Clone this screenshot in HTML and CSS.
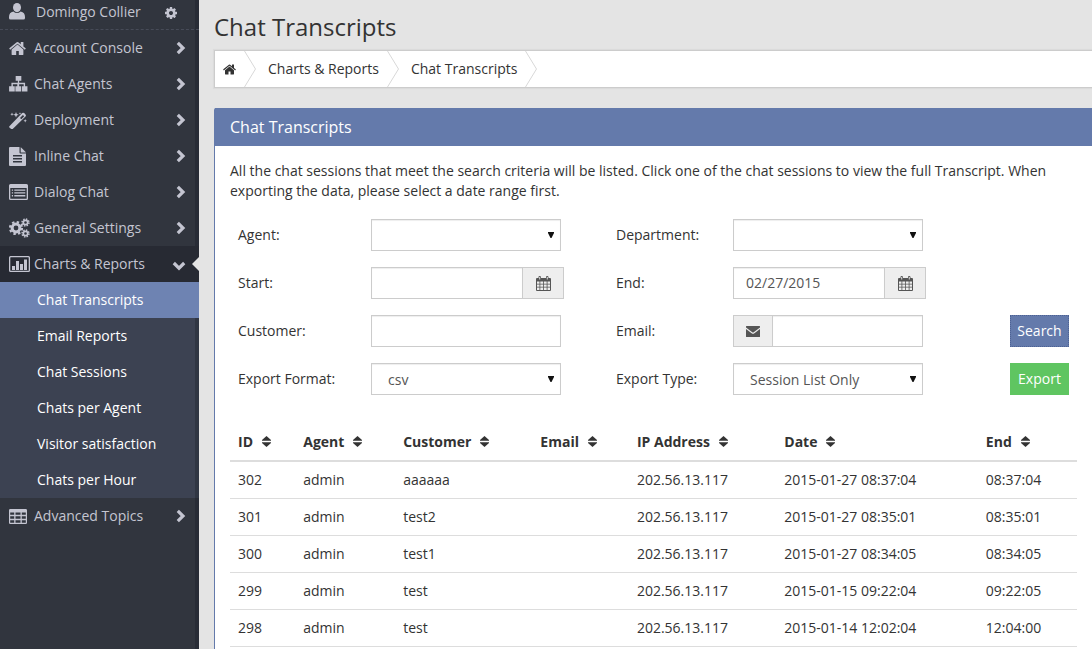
FILE: index.html
```html
<!DOCTYPE html>
<html lang="en">
<head>
  <meta charset="UTF-8" />
  <meta name="viewport" content="width=device-width, initial-scale=1.0" />
  <title>Chat Transcripts</title>
  <link rel="stylesheet" href="styles.css">
</head>
<body>
  <!-- icon set -->
  <svg class="sprite" aria-hidden="true">
    <symbol id="i-user" viewBox="0 0 16 17"><ellipse cx="8" cy="4.600" rx="4" ry="4.600"/><path d="M4.300 8.600Q8 11.600 11.700 8.600 16 9.500 16 14v1q0 1.500-1.500 1.500h-13Q0 16.500 0 15v-1Q0 9.500 4.300 8.600z"/></symbol>
    <symbol id="i-cog" viewBox="128 128 1536 1536"><path d="M1152 896q0-106-75-181t-181-75-181 75-75 181 75 181 181 75 181-75 75-181zm512-109v222q0 12-8 23t-20 13l-185 28q-19 54-39 91 35 50 107 138 10 12 10 25t-9 23q-27 37-99 108t-94 71q-12 0-26-9l-138-108q-44 23-91 38-16 136-29 186-7 28-36 28h-222q-14 0-24.500-8.500t-11.500-21.500l-28-184q-49-16-90-37l-141 107q-10 9-25 9-14 0-25-11-126-114-165-168-7-10-7-23 0-12 8-23 15-21 51-66.500t54-70.500q-27-50-41-99l-183-27q-13-2-21-12.500t-8-23.500v-222q0-12 8-23t19-13l186-28q14-46 39-92-40-57-107-138-10-12-10-24 0-10 9-23 26-36 98.500-107.500t94.500-71.500q13 0 26 10l138 107q44-23 91-38 16-136 29-186 7-28 36-28h222q14 0 24.500 8.500t11.500 21.500l28 184q49 16 90 37l142-107q9-9 24-9 13 0 25 10 129 119 165 170 7 8 7 22 0 12-8 23-15 21-51 66.500t-54 70.500q26 50 41 98l183 28q13 2 21 12.500t8 23.500z"/></symbol>
    <symbol id="i-home" viewBox="64 192 1664 1408"><path d="M1472 992v480q0 26-19 45t-45 19h-384v-384h-256v384h-384q-26 0-45-19t-19-45v-480q0-1 .5-3t.5-3l575-474 575 474q1 2 1 6zm223-69l-62 74q-8 9-21 11h-3q-13 0-21-7l-692-577-692 577q-12 8-24 7-13-2-21-11l-62-74q-8-10-7-23.500t11-21.500l719-599q32-26 76-26t76 26l244 204v-195q0-14 9-23t23-9h192q14 0 23 9t9 23v408l219 182q10 8 11 21.500t-7 23.500z"/></symbol>
    <symbol id="i-sitemap" viewBox="0 0 20 17"><path d="M7 0h6v5h-2.300v2.300H17V11h2.500v5.500h-6V11h2V8.700h-4.800V11h2v5.500h-6V11h2V8.700H4V11h2v5.500H0V11h2.500V7.300h6.800V5H7z"/></symbol>
    <symbol id="i-magic" viewBox="0 0 18 17"><path fill-rule="evenodd" d="M.4 14.300 13.200 1.100q1-.9 2 0l1.300 1.300q.9 1 0 2L3.700 17q-.7.500-1.500-.1L.4 15.500q-.5-.6 0-1.200zM11 5.900l1.300 1.300 2.900-2.900L13.900 3zM3 .6l.5 1.200 1.200.5-1.200.5L3 4l-.5-1.200-1.200-.5 1.200-.5zM7 0l.8 1.900 1.900.8-1.900.8L7 5.400l-.8-1.900-1.900-.8 1.900-.8zM11 .2l.3.9.9.3-.9.300-.3.9-.3-.9-.9-.3.9-.3zM16.200 7l.5 1.200 1.200.5-1.200.5-.5 1.200-.5-1.200-1.200-.5 1.200-.5z"/></symbol>
    <symbol id="i-file" viewBox="0 0 17 19"><path fill-rule="evenodd" d="M1 0h9.500v5.500q0 1 1 1H17V18q0 1-1 1H1q-1 0-1-1V1Q0 0 1 0zM11.700.3q.4.200.7.500l4 4q.3.300.5.700h-5.200zM4 8v1.500h9V8zM4 11v1.500h9V11zM4 14v1.500h9V14z"/></symbol>
    <symbol id="i-list" viewBox="0 0 19 16"><path fill-rule="evenodd" d="M1.500 0h16Q19 0 19 1.500v13q0 1.500-1.500 1.500h-16Q0 16 0 14.500v-13Q0 0 1.500 0zM1.300 4v10.200q0 .5.500.5h15.400q.5 0 .5-.5V4zM2.800 5.500h1.300v1.300H2.800zM5.300 5.500h11v1.300h-11zM2.800 8.300h1.300v1.300H2.800zM5.300 8.300h11v1.300h-11zM2.800 11.100h1.300v1.300H2.800zM5.300 11.100h11v1.300h-11z"/></symbol>
    <symbol id="i-chart" viewBox="0 0 21 16"><path fill-rule="evenodd" d="M1.500 0h18Q21 0 21 1.500v13q0 1.500-1.500 1.500h-18Q0 16 0 14.500v-13Q0 0 1.500 0zM1.300 1.800v12.400q0 .5.500.5h17.400q.5 0 .5-.5V1.800q0-.5-.5-.5H1.800q-.5 0-.5.500zM3 10h3v4H3zM7 5h3v9H7zM11 8h3v6h-3zM15 3.500h3V14h-3z"/></symbol>
    <symbol id="i-table" viewBox="0 0 18 15"><path fill-rule="evenodd" d="M1.300 0h15.400Q18 0 18 1.300v12.400q0 1.300-1.300 1.300H1.300Q0 15 0 13.700V1.300Q0 0 1.300 0zM1.200 3.500v2.300h4V3.500zM6.500 3.500v2.300h5V3.500zM12.800 3.500v2.300h4V3.500zM1.200 7.200v2.600h4V7.200zM6.500 7.200v2.600h5V7.200zM12.800 7.200v2.600h4V7.200zM1.200 11.200v2.500h4v-2.500zM6.500 11.200v2.500h5v-2.500zM12.800 11.200v2.500h4v-2.500z"/></symbol>
    <symbol id="i-cogs" viewBox="0 0 21 20">
      <circle cx="7" cy="10" r="3.900" fill="none" stroke="currentColor" stroke-width="3"/>
      <circle cx="7" cy="10" r="6" fill="none" stroke="currentColor" stroke-width="2.200" stroke-dasharray="2.400 2.312"/>
      <circle cx="16.500" cy="4.500" r="2.200" fill="none" stroke="currentColor" stroke-width="1.700"/>
      <circle cx="16.500" cy="4.500" r="3.500" fill="none" stroke="currentColor" stroke-width="1.400" stroke-dasharray="1.500 1.249"/>
      <circle cx="16.500" cy="15.500" r="2.200" fill="none" stroke="currentColor" stroke-width="1.700"/>
      <circle cx="16.500" cy="15.500" r="3.500" fill="none" stroke="currentColor" stroke-width="1.400" stroke-dasharray="1.500 1.249"/>
    </symbol>
    <symbol id="i-right" viewBox="0 0 10 14"><path d="M1.800 1.800 7 7l-5.200 5.200" fill="none" stroke="currentColor" stroke-width="3.200"/></symbol>
    <symbol id="i-down" viewBox="0 0 14 10"><path d="M1.800 2 7 7.200 12.200 2" fill="none" stroke="currentColor" stroke-width="3.200"/></symbol>
    <symbol id="i-calendar" viewBox="0 0 15 15"><path fill-rule="evenodd" d="M1 2h1.500V1q0-1 1.200-1T5 1v1h5V1q0-1 1.200-1t1.300 1v1H14q1 0 1 1v11q0 1-1 1H1q-1 0-1-1V3q0-1 1-1zM3.300 1v2.500h.9V1zM10.800 1v2.500h.9V1zM1 5.500v2.200h2.500V5.500zM4.300 5.500v2.200h2.800V5.500zM7.900 5.500v2.200h2.800V5.500zM11.500 5.500v2.200H14V5.500zM1 8.500v2.300h2.500V8.500zM4.300 8.500v2.300h2.800V8.500zM7.900 8.500v2.300h2.800V8.500zM11.500 8.500v2.300H14V8.500zM1 11.600V14h2.500v-2.400zM4.300 11.600V14h2.800v-2.400zM7.900 11.600V14h2.800v-2.400zM11.500 11.600V14H14v-2.400z"/></symbol>
    <symbol id="i-mail" viewBox="0 0 14 11"><path d="M.5 0h13q.5 0 .5.500v1L7.700 6.300q-.7.500-1.400 0L0 1.500v-1Q0 0 .5 0zM0 3l5.600 4.300q1.400 1 2.800 0L14 3v7.500q0 .5-.5.500H.5q-.5 0-.5-.5z"/></symbol>
    <symbol id="i-sort" viewBox="0 0 9 11"><path d="M4.500 0 9 4v.7H0V4zM4.500 11 9 7v-.7H0V7z"/></symbol>
    <symbol id="i-caret" viewBox="0 0 6 6"><path d="M0 0h6v1L3.500 6h-1L0 1z"/></symbol>
    <symbol id="i-crumb" viewBox="0 0 12 36"><path d="M.5 0l11 18-11 18" fill="none" stroke="#d8d8d8"/></symbol>
  </svg>

  <div class="page">
    <aside class="sidebar">
      <div class="user">
        <svg class="user-icon"><use href="#i-user"/></svg>
        <span>Domingo Collier</span>
        <a href="#" class="user-settings" aria-label="Settings"><svg><use href="#i-cog"/></svg></a>
      </div>
      <nav>
        <ul class="menu">
          <li><a href="#"><svg class="icon" style="--w:17px;--h:15px"><use href="#i-home"/></svg><span>Account Console</span><svg class="arrow"><use href="#i-right"/></svg></a></li>
          <li><a href="#"><svg class="icon" style="--w:19px;--h:16px"><use href="#i-sitemap"/></svg><span>Chat Agents</span><svg class="arrow"><use href="#i-right"/></svg></a></li>
          <li><a href="#"><svg class="icon" style="--w:18px;--h:17px"><use href="#i-magic"/></svg><span>Deployment</span><svg class="arrow"><use href="#i-right"/></svg></a></li>
          <li><a href="#"><svg class="icon" style="--w:17px;--h:19px"><use href="#i-file"/></svg><span>Inline Chat</span><svg class="arrow"><use href="#i-right"/></svg></a></li>
          <li><a href="#"><svg class="icon" style="--w:19px;--h:16px"><use href="#i-list"/></svg><span>Dialog Chat</span><svg class="arrow"><use href="#i-right"/></svg></a></li>
          <li><a href="#"><svg class="icon" style="--w:21px;--h:20px"><use href="#i-cogs"/></svg><span>General Settings</span><svg class="arrow"><use href="#i-right"/></svg></a></li>
          <li class="open">
            <a href="#"><svg class="icon" style="--w:21px;--h:16px"><use href="#i-chart"/></svg><span>Charts &amp; Reports</span><svg class="arrow arrow-down"><use href="#i-down"/></svg></a>
            <ul class="submenu">
              <li class="active"><a href="#">Chat Transcripts</a></li>
              <li><a href="#">Email Reports</a></li>
              <li><a href="#">Chat Sessions</a></li>
              <li><a href="#">Chats per Agent</a></li>
              <li><a href="#">Visitor satisfaction</a></li>
              <li><a href="#">Chats per Hour</a></li>
            </ul>
          </li>
          <li><a href="#"><svg class="icon" style="--w:18px;--h:15px"><use href="#i-table"/></svg><span>Advanced Topics</span><svg class="arrow"><use href="#i-right"/></svg></a></li>
        </ul>
      </nav>
    </aside>

    <main>
      <h1>Chat Transcripts</h1>
      <ol class="breadcrumb">
        <li><a href="#" aria-label="Home"><svg class="crumb-home"><use href="#i-home"/></svg></a><svg class="crumb-sep"><use href="#i-crumb"/></svg></li>
        <li><a href="#">Charts &amp; Reports</a><svg class="crumb-sep"><use href="#i-crumb"/></svg></li>
        <li><a href="#">Chat Transcripts</a><svg class="crumb-sep"><use href="#i-crumb"/></svg></li>
      </ol>

      <section class="panel">
        <h2>Chat Transcripts</h2>
        <div class="panel-body">
          <p>All the chat sessions that meet the search criteria will be listed. Click one of the chat sessions to view the full Transcript. When exporting the data, please select a date range first.</p>

          <form class="filters">
            <label for="agent">Agent:</label>
            <div class="select">
              <select id="agent"><option></option></select>
              <svg><use href="#i-caret"/></svg>
            </div>
            <label for="department">Department:</label>
            <div class="select">
              <select id="department"><option></option></select>
              <svg><use href="#i-caret"/></svg>
            </div>
            <span></span>

            <label for="start">Start:</label>
            <div class="group group-date">
              <input type="text" id="start">
              <button type="button" class="addon" aria-label="Pick start date"><svg class="cal"><use href="#i-calendar"/></svg></button>
            </div>
            <label for="end">End:</label>
            <div class="group group-date">
              <input type="text" id="end" value="02/27/2015">
              <button type="button" class="addon" aria-label="Pick end date"><svg class="cal"><use href="#i-calendar"/></svg></button>
            </div>
            <span></span>

            <label for="customer">Customer:</label>
            <div class="group"><input type="text" id="customer"></div>
            <label for="email">Email:</label>
            <div class="group group-mail">
              <span class="addon"><svg class="mail"><use href="#i-mail"/></svg></span>
              <input type="text" id="email">
            </div>
            <button type="button" class="btn btn-search">Search</button>

            <label for="format">Export Format:</label>
            <div class="select">
              <select id="format"><option>csv</option></select>
              <svg><use href="#i-caret"/></svg>
            </div>
            <label for="type">Export Type:</label>
            <div class="select">
              <select id="type"><option>Session List Only</option></select>
              <svg><use href="#i-caret"/></svg>
            </div>
            <button type="button" class="btn btn-export">Export</button>
          </form>

          <table>
            <colgroup>
              <col class="c-id"><col class="c-agent"><col class="c-customer"><col class="c-email"><col class="c-ip"><col class="c-date"><col class="c-end">
            </colgroup>
            <thead>
              <tr>
                <th>ID<svg><use href="#i-sort"/></svg></th>
                <th>Agent<svg><use href="#i-sort"/></svg></th>
                <th>Customer<svg><use href="#i-sort"/></svg></th>
                <th>Email<svg><use href="#i-sort"/></svg></th>
                <th>IP Address<svg><use href="#i-sort"/></svg></th>
                <th>Date<svg><use href="#i-sort"/></svg></th>
                <th>End<svg><use href="#i-sort"/></svg></th>
              </tr>
            </thead>
            <tbody>
              <tr><td>302</td><td>admin</td><td>aaaaaa</td><td></td><td>202.56.13.117</td><td>2015-01-27 08:37:04</td><td>08:37:04</td></tr>
              <tr><td>301</td><td>admin</td><td>test2</td><td></td><td>202.56.13.117</td><td>2015-01-27 08:35:01</td><td>08:35:01</td></tr>
              <tr><td>300</td><td>admin</td><td>test1</td><td></td><td>202.56.13.117</td><td>2015-01-27 08:34:05</td><td>08:34:05</td></tr>
              <tr><td>299</td><td>admin</td><td>test</td><td></td><td>202.56.13.117</td><td>2015-01-15 09:22:04</td><td>09:22:05</td></tr>
              <tr><td>298</td><td>admin</td><td>test</td><td></td><td>202.56.13.117</td><td>2015-01-14 12:02:04</td><td>12:04:00</td></tr>
            </tbody>
          </table>
        </div>
      </section>
    </main>
  </div>
</body>
</html>
```
FILE: styles.css
```css
* { box-sizing: border-box; }
body {
  margin: 0;
  background: #e4e4e4;
  font-family: "Open Sans", sans-serif;
  font-size: 14px;
  line-height: 20px;
  color: #333;
}
a {
  color: inherit;
  text-decoration: none;
}
ul, ol {
  list-style: none;
  margin: 0;
  padding: 0;
}
svg {
  fill: currentColor;
  flex: none;
}
.sprite {
  position: absolute;
  width: 0;
  height: 0;
}
.page {
  display: flex;
  min-height: 100vh;
}

/* sidebar */
.sidebar {
  width: 199px;
  flex: none;
  background: #31353e;
  box-shadow: inset -4px 0 0 #282c36;
  color: #c4c5d1;
}
.user {
  display: flex;
  align-items: center;
  height: 30px;
  padding: 0 22px 6px 9px;
  border-bottom: 1px dashed #474b58;
}
.user-icon {
  width: 16px;
  height: 17px;
  margin-right: 11px;
}
.user-settings {
  margin-left: auto;
  padding-top: 2px;
  line-height: 0;
}
.user-settings svg {
  width: 12px;
  height: 12px;
}
.menu a {
  display: flex;
  align-items: center;
  height: 36px;
}
.menu > li > a {
  display: grid;
  grid-template-columns: 25px 1fr auto;
  padding: 0 13px 0 9px;
}
.icon {
  width: var(--w);
  height: var(--h);
}
.arrow {
  width: 10px;
  height: 14px;
}
.arrow-down {
  width: 14px;
  height: 10px;
  margin-top: 4px;
}
.open > a {
  position: relative;
  background: #272a33;
}
.open > a::after {
  content: "";
  position: absolute;
  right: 0;
  top: 11px;
  border: 7px solid transparent;
  border-right-color: #e4e4e4;
  border-left: 0;
}
.submenu {
  background: #3c4252;
  box-shadow: inset -4px 0 0 #303643;
  color: #fff;
}
.submenu a {
  padding-left: 37px;
}
.submenu .active {
  background: #6e83b2;
}

/* content */
main {
  flex: 1;
  min-width: 0;
  padding: 12px 0 0 15px;
}
h1 {
  margin: 0 0 8px;
  font-size: 24px;
  font-weight: 400;
  line-height: 30px;
}
.breadcrumb {
  display: flex;
  height: 38px;
  margin-bottom: 20px;
  padding-left: 8px;
  background: #fff;
  border: 1px solid #ccc;
  border-right: 0;
  box-shadow: 0 0 1px 1px rgba(0,0,0,0.04);
}
.breadcrumb li {
  display: flex;
  align-items: center;
  margin-right: 12px;
}
.crumb-home {
  display: block;
  width: 13px;
  height: 11px;
}
.crumb-sep {
  width: 12px;
  height: 36px;
  margin-left: 8px;
}
.panel {
  background: #fff;
  border-left: 1px solid #647aab;
  border-radius: 2px 0 0 0;
}
.panel h2 {
  margin: 0;
  padding: 9px 15px;
  background: #647aab;
  color: #fff;
  font-size: 16px;
  font-weight: 400;
  line-height: 20px;
}
.panel-body {
  padding: 15px;
}
.panel-body p {
  margin: 0 0 18px;
}

/* search form */
.filters {
  display: grid;
  grid-template-columns: 133fr 245fr 117fr 277fr 67fr;
  row-gap: 16px;
  align-items: center;
  justify-items: start;
  padding-left: 8px;
  margin-bottom: 29px;
}
.select {
  position: relative;
  width: 190px;
}
.select svg {
  position: absolute;
  right: 7px;
  top: 13px;
  width: 6px;
  height: 6px;
  color: #111;
  pointer-events: none;
}
select, input {
  width: 100%;
  min-width: 0;
  height: 32px;
  padding: 0 12px 2px;
  background: #fff;
  border: 1px solid #ccc;
  border-radius: 0;
  box-shadow: inset 0 1px 1px rgba(0,0,0,0.07);
  color: #555;
  font: inherit;
}
select {
  display: block;
  appearance: none;
  padding: 2px 16px 0;
}
.group {
  display: flex;
  width: 190px;
}
.group-date {
  width: 193px;
}
.addon {
  display: flex;
  align-items: center;
  justify-content: center;
  flex: none;
  height: 32px;
  padding: 0;
  background: #eee;
  border: 1px solid #ccc;
  color: #555;
}
.group-date .addon {
  border-left: 0;
  width: 41px;
}
.group-mail .addon {
  border-right: 0;
  width: 39px;
}
.cal {
  width: 15px;
  height: 15px;
}
.mail {
  width: 14px;
  height: 11px;
}
.btn {
  width: 59px;
  height: 32px;
  padding: 0;
  border: 0;
  color: #fff;
  font: inherit;
}
.btn-search {
  background: #647aab;
  border: 1px dotted #4d6294;
}
.btn-export {
  background: #5fc561;
}

/* results */
table {
  width: 100%;
  table-layout: fixed;
  border-spacing: 0;
}
.c-id { width: 7.7%; }
.c-agent { width: 11.8%; }
.c-customer { width: 16.2%; }
.c-email { width: 11.4%; }
.c-ip { width: 17.4%; }
.c-date { width: 23.8%; }
th, td {
  height: 37px;
  padding: 8px;
  text-align: left;
  border-bottom: 1px solid #ddd;
}
th {
  font-weight: 700;
  border-bottom-width: 2px;
}
th svg {
  width: 9px;
  height: 11px;
  margin-left: 9px;
}
```
